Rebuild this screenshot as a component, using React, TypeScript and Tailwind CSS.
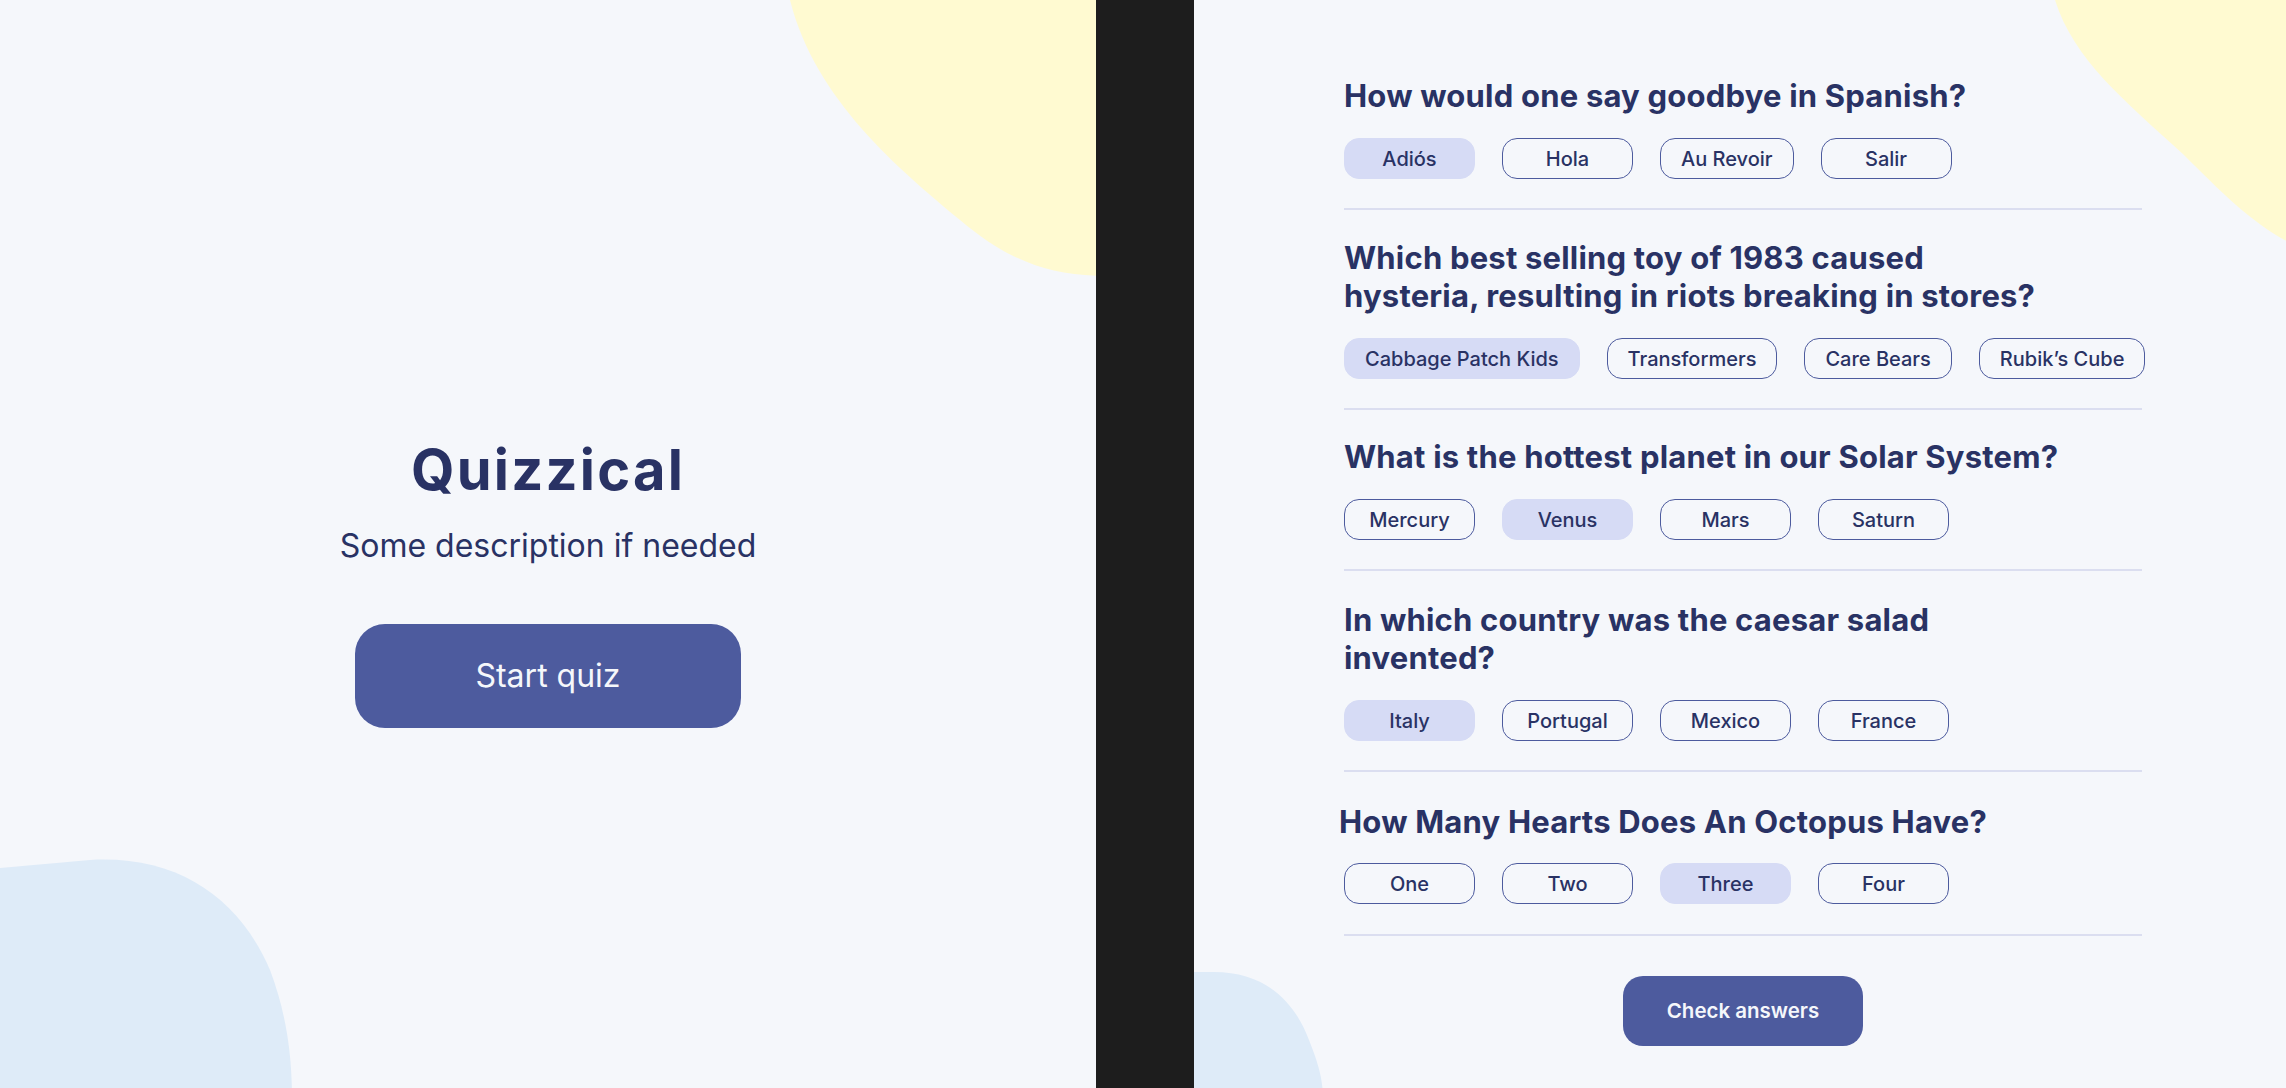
import React, { useState } from 'react';

interface Question {
  id: number;
  text: string;
  answers: string[];
  picked: string;
}

const QUESTIONS: Question[] = [
  { id: 1, text: 'How would one say goodbye in Spanish?', answers: ['Adiós', 'Hola', 'Au Revoir', 'Salir'], picked: 'Adiós' },
  {
    id: 2,
    text: 'Which best selling toy of 1983 caused\nhysteria, resulting in riots breaking in stores?',
    answers: ['Cabbage Patch Kids', 'Transformers', 'Care Bears', 'Rubik’s Cube'],
    picked: 'Cabbage Patch Kids',
  },
  { id: 3, text: 'What is the hottest planet in our Solar System?', answers: ['Mercury', 'Venus', 'Mars', 'Saturn'], picked: 'Venus' },
  {
    id: 4,
    text: 'In which country was the caesar salad\ninvented?',
    answers: ['Italy', 'Portugal', 'Mexico', 'France'],
    picked: 'Italy',
  },
  { id: 5, text: 'How Many Hearts Does An Octopus Have?', answers: ['One', 'Two', 'Three', 'Four'], picked: 'Three' },
];

// spacing above each block differs a little in the mock
const blockGap = ['', 'mt-[29px]', 'mt-[28px]', 'mt-[30px]', 'mt-[31px]'];

const StartScreen: React.FC = () => (
  <section className="relative h-full w-[1096px] shrink-0 overflow-hidden bg-[#f5f7fb]">
    <svg className="pointer-events-none absolute inset-0" width="1096" height="1088" viewBox="0 0 1096 1088">
      <path d="M790 0 C815 100 900 170 960 220 C1010 262 1050 276 1110 276 L1110 0 Z" fill="#fffad1" />
      <path d="M0 868 L90 860 C180 855 240 900 270 970 C285 1010 292 1050 292 1100 L0 1100 Z" fill="#deebf8" />
    </svg>
    <div className="relative z-10 flex flex-col items-center pt-[436px] text-[#293264]">
      <h1 className="text-[56px] font-bold leading-[68px] tracking-[0.04em]">Quizzical</h1>
      <p className="mt-[22px] text-[32px] leading-[39px]">Some description if needed</p>
      <button
        type="button"
        className="mt-[59px] h-[104px] w-[386px] rounded-[30px] bg-[#4d5b9e] text-[32px] text-[#f5f7fb]"
      >
        Start quiz
      </button>
    </div>
  </section>
);

const QuizScreen: React.FC = () => {
  const [picks, setPicks] = useState<Record<number, string>>(() =>
    Object.fromEntries(QUESTIONS.map((q) => [q.id, q.picked])),
  );

  return (
    <section className="relative h-full flex-1 overflow-hidden bg-[#f5f7fb]">
      <svg className="pointer-events-none absolute inset-0" width="1092" height="1088" viewBox="0 0 1092 1088">
        <path d="M861 0 C880 60 930 100 990 155 C1030 195 1060 225 1100 245 L1100 0 Z" fill="#fffad1" />
        <path d="M-10 972 L20 972 C70 972 100 1000 115 1040 C125 1065 129 1080 129 1100 L-10 1100 Z" fill="#deebf8" />
      </svg>

      <div className="relative z-10 ml-[150px] w-[798px] pt-[77px]">
        {QUESTIONS.map((q, i) => (
          <div key={q.id} className={blockGap[i]}>
            <h2
              className={`whitespace-pre-line text-[31px] font-bold leading-[38px] tracking-[0.2px] text-[#293264] ${
                q.id === 5 ? '-ml-[5px]' : ''
              }`}
            >
              {q.text}
            </h2>
            <div className={`flex gap-[27px] ${q.id === 5 ? 'mt-[22px]' : 'mt-[23px]'}`}>
              {q.answers.map((a) => {
                const on = picks[q.id] === a;
                return (
                  <button
                    key={a}
                    type="button"
                    onClick={() => setPicks((p) => ({ ...p, [q.id]: a }))}
                    className={`flex h-[41px] min-w-[131px] shrink-0 items-center justify-center whitespace-nowrap rounded-[15px] border-[1.5px] px-[20px] text-[20px] font-medium text-[#293264] ${
                      on ? 'border-[#d6dbf5] bg-[#d6dbf5]' : 'border-[#4d5b9e] bg-transparent'
                    }`}
                  >
                    {a}
                  </button>
                );
              })}
            </div>
            <div className={`h-[2px] bg-[#dbdef0] ${q.id === 5 ? 'mt-[30px]' : 'mt-[29px]'}`} />
          </div>
        ))}

        <div className="mt-[40px] flex justify-center">
          <button
            type="button"
            className="h-[70px] w-[240px] rounded-[20px] bg-[#4d5b9e] text-[20.5px] font-semibold text-[#f5f7fb]"
          >
            Check answers
          </button>
        </div>
      </div>
    </section>
  );
};

const App: React.FC = () => (
  <div className="flex h-[1088px] w-full overflow-hidden bg-[#1d1d1d] font-['Inter',sans-serif]">
    <StartScreen />
    <div className="w-[98px] shrink-0" />
    <QuizScreen />
  </div>
);

export default App;
